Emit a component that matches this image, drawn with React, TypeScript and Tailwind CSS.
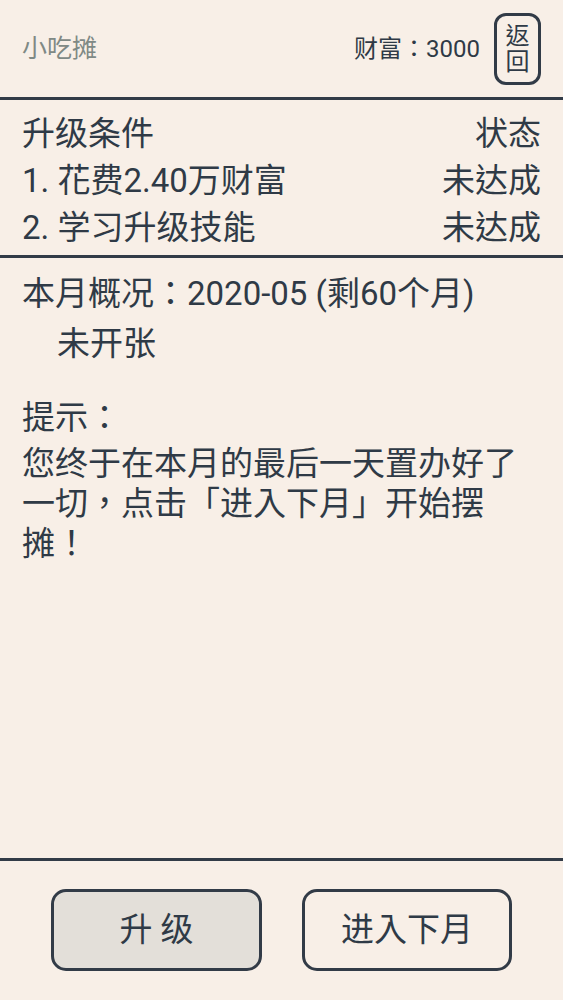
const conditions = [
  { label: "1. 花费2.40万财富", status: "未达成" },
  { label: "2. 学习升级技能", status: "未达成" },
];

function Divider() {
  return <div className="h-[3px] w-full bg-[#323b47]" />;
}

export default function App() {
  return (
    <div
      className="flex h-[1000px] w-full flex-col bg-[#f8efe7] text-[#2f3a46]"
      style={{ fontFamily: "Roboto, 'Noto Sans CJK TC', sans-serif" }}
    >
      {/* header */}
      <header className="flex h-[97px] items-center justify-between pl-[22px] pr-[22px]">
        <span className="text-[25px] text-[#7f8985]">小吃摊</span>
        <div className="flex items-center gap-[14px]">
          <span className="text-[24px]">财富：3000</span>
          <button className="flex h-[72px] w-[47px] flex-col items-center justify-center rounded-[12px] border-[3px] border-[#323b47] text-[24px] leading-[26px]">
            <span>返</span>
            <span>回</span>
          </button>
        </div>
      </header>
      <Divider />

      {/* upgrade conditions */}
      <section className="px-[22px] pb-[4px] pt-[10px] text-[33px]">
        <div className="flex h-[47px] items-center justify-between">
          <span>升级条件</span>
          <span>状态</span>
        </div>
        {conditions.map((c) => (
          <div key={c.label} className="flex h-[47px] items-center justify-between">
            <span>{c.label}</span>
            <span>{c.status}</span>
          </div>
        ))}
      </section>
      <Divider />

      {/* monthly summary */}
      <main className="flex-1 px-[22px] pt-[11px] text-[33px]">
        <div className="leading-[50px]">本月概况：2020-05 (剩60个月)</div>
        <div className="pl-[35px] leading-[50px]">未开张</div>
        <div className="mt-[29px] leading-[40px]">提示：</div>
        <p className="mt-[6px] leading-[40px]">
          您终于在本月的最后一天置办好了一切，点击「进入下月」开始摆摊！
        </p>
      </main>
      <Divider />

      {/* actions */}
      <footer className="flex h-[139px] items-start justify-center gap-[40px] pt-[28px]">
        <button className="h-[82px] w-[211px] rounded-[15px] border-[3px] border-[#323b47] bg-[#e3dfd9] text-[33px]">
          升 级
        </button>
        <button className="h-[82px] w-[210px] rounded-[15px] border-[3px] border-[#323b47] text-[33px]">
          进入下月
        </button>
      </footer>
    </div>
  );
}
